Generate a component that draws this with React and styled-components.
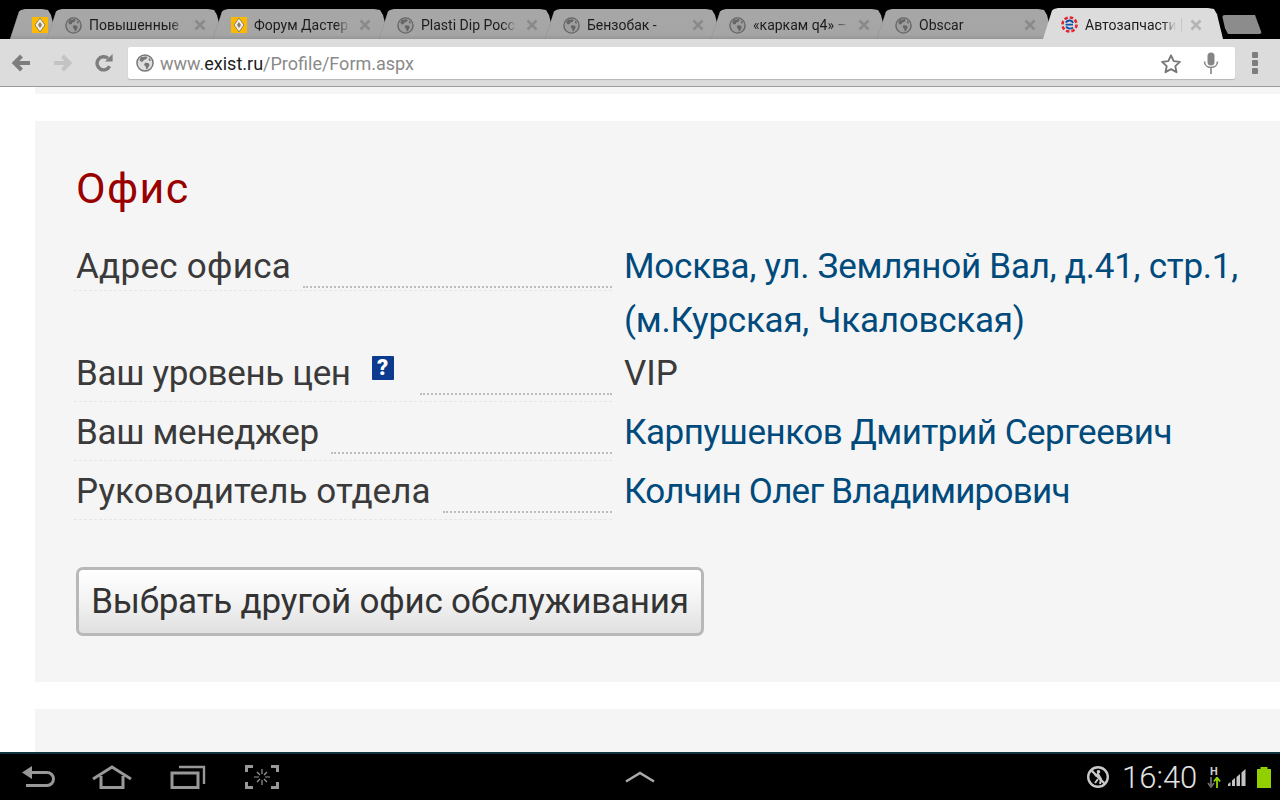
import React from "react";
import styled, { createGlobalStyle } from "styled-components";

const GlobalStyle = createGlobalStyle`
  html, body { margin: 0; padding: 0; background: #fff; }
  body { font-family: Roboto, "Liberation Sans", sans-serif; }
  #root { width: 1280px; height: 800px; overflow: hidden; }
`;

const Screen = styled.div`
  width: 1280px;
  height: 800px;
  display: flex;
  flex-direction: column;
  overflow: hidden;
`;

/* tab strip */
const TabStrip = styled.div`
  height: 39px;
  flex: none;
  background: #000;
  display: flex;
  align-items: flex-end;
  padding-left: 10px;
`;

const TabShape = styled.div`
  position: relative;
  flex: none;
  box-sizing: border-box;
  width: ${({ $w }) => $w || 176}px;
  margin-right: -10px;
  height: ${({ $active }) => ($active ? 31 : 30)}px;
  display: flex;
  align-items: center;
  padding-left: ${({ $stub }) => ($stub ? 22 : 18)}px;
  padding-top: 2px;
  z-index: ${({ $active }) => ($active ? 3 : 1)};
  background: ${({ $active }) =>
    $active ? "#dcdcdc" : "linear-gradient(#a7a7a7, #a5a5a5 85%, #969696)"};
  clip-path: polygon(
    0 100%, 9px 8%, 11px 3%, 15px 0,
    calc(100% - 15px) 0, calc(100% - 9px) 3%, calc(100% - 6px) 20%, 100% 100%
  );
  &::before {
    content: "";
    position: absolute;
    left: 4px;
    top: 0;
    bottom: 0;
    width: 1px;
    background: ${({ $active }) => ($active ? "transparent" : "#7e7e7e")};
    transform: skewX(-18deg);
  }
`;

const TabTitle = styled.span`
  margin-left: 7px;
  width: ${({ $active }) => ($active ? 91 : 96)}px;
  font-size: 14px;
  color: #1c1c1c;
  white-space: nowrap;
  overflow: hidden;
  flex: none;
  -webkit-mask-image: linear-gradient(to right, #000 85%, transparent);
  mask-image: linear-gradient(to right, #000 85%, transparent);
`;

const TabClose = styled.span`
  margin-left: ${({ $active }) => ($active ? 5 : 9)}px;
  padding-left: ${({ $active }) => ($active ? 8 : 0)}px;
  border-left: ${({ $active }) => ($active ? "1px solid #c6c6c6" : "none")};
  display: flex;
  align-items: center;
  height: ${({ $active }) => ($active ? "14px" : "auto")};
`;

const NewTab = styled.div`
  flex: none;
  width: 40px;
  height: 19px;
  margin: 0 0 5px 9px;
  background: #8c8c8c;
  clip-path: polygon(0 0, 33px 0, 100% 100%, 6px 100%, 3px 70%);
  border-radius: 3px;
`;

/* toolbar */
const Toolbar = styled.div`
  height: 48px;
  flex: none;
  box-sizing: border-box;
  background: #dcdcdc;
  border-bottom: 1px solid #9a9a9a;
  display: flex;
  align-items: center;
  padding: 1px 0 0 11px;
`;

const NavIcon = styled.span`
  flex: none;
  display: flex;
  width: ${({ $w }) => $w}px;
  justify-content: flex-start;
`;

const Omnibox = styled.div`
  flex: none;
  box-sizing: border-box;
  width: 1107px;
  height: 32px;
  background: #fff;
  border-radius: 2px;
  box-shadow: 0 1px 1px #b5b5b5;
  display: flex;
  align-items: center;
  padding: 0 16px 0 8px;
`;

const Url = styled.span`
  margin-left: 6px;
  flex: 1;
  font-size: 18px;
  color: #8a8a8a;
`;

const Host = styled.span`
  color: #1c1c1c;
`;

const OmniIcon = styled.span`
  display: flex;
  margin-left: ${({ $gap }) => $gap || 0}px;
`;

const MenuDots = styled.div`
  margin-left: 17px;
  display: grid;
  gap: 2px;
  span {
    display: block;
    width: 6px;
    height: 6px;
    border-radius: 1px;
    background: #7e7e7e;
  }
`;

/* page */
const Page = styled.div`
  flex: 1;
  min-height: 0;
  background: #fff;
  padding-left: 35px;
  display: flex;
  flex-direction: column;
  overflow: hidden;
`;

const Sliver = styled.div`
  flex: none;
  height: ${({ $h }) => $h}px;
  background: #f5f5f5;
  margin: ${({ $m }) => $m || "0"};
`;

const Panel = styled.section`
  flex: none;
  box-sizing: border-box;
  height: 561px;
  margin-top: 27px;
  background: #f5f5f5;
  padding: 43px 0 0 41px;
`;

const Heading = styled.h2`
  margin: 0;
  font-size: 43px;
  line-height: 48px;
  font-weight: 400;
  letter-spacing: 1.4px;
  color: #990000;
`;

const InfoGrid = styled.div`
  margin-top: 28px;
  display: grid;
  grid-template-columns: 536px 1fr;
  column-gap: 12px;
  width: 1204px;
`;

const LabelCell = styled.div`
  display: flex;
  align-items: flex-start;
  box-sizing: border-box;
  height: ${({ $h }) => $h}px;
  margin-left: -2px;
  padding-left: 2px;
  border-bottom: 1px dashed #e6e6e6;
  font-size: 35px;
  line-height: 54px;
  color: #3a3a3a;
  letter-spacing: ${({ $ls }) => $ls}px;
  white-space: nowrap;
`;

const Leader = styled.span`
  flex: 1;
  margin-left: ${({ $gap }) => $gap || 12}px;
  height: 46px;
  border-bottom: 2px dotted #bcbcbc;
`;

const HelpIcon = styled.span`
  flex: none;
  width: 22px;
  height: 24px;
  margin: 9px 0 0 21px;
  background: #0c3a8e;
  border-radius: 1px;
  color: #fff;
  font-size: 22px;
  line-height: 24px;
  font-weight: 900;
  text-align: center;
  letter-spacing: 0;
`;

const ValueCell = styled.div`
  font-size: 35px;
  line-height: 54px;
  letter-spacing: ${({ $ls }) => $ls}px;
  color: ${({ $link }) => ($link ? "#004a7c" : "#3a3a3a")};
  height: ${({ $h }) => $h}px;
`;

const ChangeButton = styled.button`
  display: block;
  box-sizing: border-box;
  width: 628px;
  height: 69px;
  margin-top: 43px;
  padding: 0;
  border: 3px solid #b8b8b8;
  border-radius: 7px;
  background: linear-gradient(#ffffff, #f4f4f4 45%, #e0e0e0);
  font-family: inherit;
  font-size: 35px;
  letter-spacing: -0.2px;
  color: #333;
`;

/* android system bar */
const SystemBar = styled.footer`
  flex: none;
  box-sizing: border-box;
  height: 48px;
  background: #000;
  border-top: 2px solid #0f3440;
  display: flex;
  align-items: center;
  padding: 0 9px 0 22px;
`;

const SysButton = styled.span`
  display: flex;
  margin-left: ${({ $gap }) => $gap || 0}px;
`;

const Status = styled.div`
  margin-left: auto;
  display: flex;
  align-items: center;
`;

const Clock = styled.span`
  margin-left: 12px;
  padding-top: 1px;
  font-size: 31px;
  font-weight: 300;
  color: #e2e2e2;
  width: 75px;
`;

const NetType = styled.div`
  margin-left: 10px;
  width: 14px;
  display: flex;
  flex-direction: column;
  align-items: center;
  font-size: 11px;
  line-height: 11px;
  font-weight: 700;
  color: #cfcfcf;
`;

const StatusIcon = styled.span`
  display: flex;
  margin-left: ${({ $gap }) => $gap}px;
`;

const Globe = ({ size = 17, color = "#666", bg = "#9e9e9e" }) => (
  <svg width={size} height={size} viewBox="0 0 17 17">
    <circle cx="8.5" cy="8.5" r="7.6" fill={bg} stroke={color} strokeWidth="1.4" />
    <path
      d="M5 2.6c1.6.3 3 .2 4.5-.5l1.3 1.5-1.6 1.5-1.8.3-.7 1.6-2 .4-1.5-2zM8.6 8.2l3 .3 1.2 1.6-1.3 3-1.6 1.7-.7-2.7-1.6-2zM12.6 3.6l1.6 2.6-1.6.3-.8-1.6z"
      fill={color}
    />
  </svg>
);

const RenaultIcon = () => (
  <svg width="16" height="16" viewBox="0 0 16 16">
    <rect width="16" height="16" fill="#fdb900" />
    <path d="M8 1 13 8 8 15 3 8z" fill="#f1ece0" stroke="#7d7058" strokeWidth="0.8" />
    <path d="M8 5 10 8 8 11 6 8z" fill="#8b7d63" />
  </svg>
);

const ExistIcon = () => (
  <svg width="17" height="17" viewBox="0 0 17 17">
    <circle cx="8.5" cy="8.5" r="7" fill="none" stroke="#e3262b" strokeWidth="2.6" strokeDasharray="3.5 2" />
    <circle cx="8.5" cy="8.5" r="5.6" fill="#dcdcdc" />
    <path d="M4.5 8.6h7.5" stroke="#1350a8" strokeWidth="1.6" />
    <path d="M5 6.600C6 4 11 3.500 12 7M5.200 10.500C6.500 13 10 13 12 11.500" fill="none" stroke="#1350a8" strokeWidth="1.8" />
  </svg>
);

const CloseX = ({ color = "#8a8a8a" }) => (
  <svg width="12" height="12" viewBox="0 0 12 12">
    <path d="M1.5 1.5l9 9M10.5 1.5l-9 9" stroke={color} strokeWidth="2.6" />
  </svg>
);

const BackIcon = () => (
  <svg width="20" height="18" viewBox="0 0 20 18">
    <path d="M19 9H5M10.5 2 3.5 9l7 7" fill="none" stroke="#7d7d7d" strokeWidth="4" />
  </svg>
);

const ForwardIcon = () => (
  <svg width="20" height="18" viewBox="0 0 20 18">
    <path d="M1 9h14M9.5 2l7 7-7 7" fill="none" stroke="#c3c3c3" strokeWidth="4" />
  </svg>
);

const ReloadIcon = () => (
  <svg width="18" height="18" viewBox="0 0 18 18">
    <path d="M14.6 12.2A6.6 6.6 0 1 1 13 4.3" fill="none" stroke="#7d7d7d" strokeWidth="3.4" />
    <path d="M10 7.6h7.6V0z" fill="#7d7d7d" />
  </svg>
);

const StarIcon = () => (
  <svg width="22" height="21" viewBox="0 0 22 21">
    <path d="M11 2.4l2.7 5.7 6.2.8-4.6 4.2 1.2 6.1L11 16.2l-5.5 3 1.2-6.1L2.1 8.9l6.2-.8z" fill="none" stroke="#777" strokeWidth="1.9" strokeLinejoin="round" />
  </svg>
);

const MicIcon = () => (
  <svg width="16" height="22" viewBox="0 0 16 22">
    <rect x="4.5" y="0.5" width="7" height="13" rx="3.5" fill="#858585" />
    <path d="M1.5 9.5c0 8 13 8 13 0M8 16v6" fill="none" stroke="#858585" strokeWidth="1.6" />
  </svg>
);

const SysBack = () => (
  <svg width="34" height="24" viewBox="0 0 34 24">
    <path d="M9 7.5h16a6.5 6.5 0 0 1 0 13H4" fill="none" stroke="#989898" strokeWidth="3" />
    <path d="M0 7.5 10 1v13z" fill="#989898" />
  </svg>
);

const SysHome = () => (
  <svg width="40" height="24" viewBox="0 0 40 24">
    <path d="M1 14 20 2l19 12M9 11v11.5h22V11" fill="none" stroke="#989898" strokeWidth="3" />
  </svg>
);

const SysRecent = () => (
  <svg width="36" height="24" viewBox="0 0 36 24">
    <path d="M9 2h25v17" fill="none" stroke="#989898" strokeWidth="2.4" />
    <rect x="2" y="8" width="26" height="14.5" fill="none" stroke="#989898" strokeWidth="3" />
  </svg>
);

const SysShot = () => (
  <svg width="34" height="24" viewBox="0 0 34 24">
    <path d="M1.5 7V1.5H8M26 1.5h6.5V7M32.5 17v5.5H26M8 22.500H1.500V17" fill="none" stroke="#989898" strokeWidth="3" />
    <path d="M17 4v5M17 15v5M9 12h5M20 12h5M12 7l3 3M22 7l-3 3M12 17l3-3M22 17l-3-3" stroke="#989898" strokeWidth="1.2" />
  </svg>
);

const SysUp = () => (
  <svg width="30" height="12" viewBox="0 0 30 12">
    <path d="M1 10.5 15 2l14 8.5" fill="none" stroke="#aaa" strokeWidth="2.6" />
  </svg>
);

const NoSync = () => (
  <svg width="24" height="24" viewBox="0 0 24 24">
    <circle cx="12" cy="12" r="9.8" fill="none" stroke="#c8c8c8" strokeWidth="2.4" />
    <path d="M5 5l14 14" stroke="#c8c8c8" strokeWidth="2.4" />
    <circle cx="12.5" cy="6.8" r="1.8" fill="#c8c8c8" />
    <path d="M9 11l3-2 3 5-1 5M12 14l-3 4" fill="none" stroke="#c8c8c8" strokeWidth="2" />
  </svg>
);

const Arrows = () => (
  <svg width="14" height="11" viewBox="0 0 14 11">
    <path d="M4 0v8M1 6l3 4 3-4" fill="none" stroke="#6b6b6b" strokeWidth="1.8" />
    <path d="M10 11V2M7 4.5l3-4 3 4" fill="none" stroke="#8fd400" strokeWidth="1.8" />
  </svg>
);

const Signal = () => (
  <svg width="20" height="18" viewBox="0 0 20 18">
    <path d="M0 18v-2l2.5-2V18zM4 18v-5.500l3-2.500v8zM8.500 18V9l3.500-3v12zM13.500 18V4.500L17.500 1v17z" fill="#c4c4c4" />
  </svg>
);

const Battery = () => (
  <svg width="14" height="21" viewBox="0 0 14 21">
    <path d="M3.5 0h7v2H14v19H0V2h3.500z" fill="#92cf00" />
  </svg>
);

const tabs = [
  { title: "", icon: <RenaultIcon />, w: 47, stub: true },
  { title: "Повышенные", icon: <Globe /> },
  { title: "Форум Дастер", icon: <RenaultIcon /> },
  { title: "Plasti Dip Росс", icon: <Globe /> },
  { title: "Бензобак -", icon: <Globe /> },
  { title: "«каркам q4» –", icon: <Globe /> },
  { title: "Obscar", icon: <Globe /> },
];

export default function App() {
  return (
    <>
      <GlobalStyle />
      <Screen>
        <TabStrip>
          {tabs.map((tab, i) => (
            <TabShape key={i} $w={tab.w} $stub={tab.stub}>
              {tab.icon}
              {!tab.stub && <TabTitle>{tab.title}</TabTitle>}
              {!tab.stub && (
                <TabClose>
                  <CloseX />
                </TabClose>
              )}
            </TabShape>
          ))}
          <TabShape $active $w={180}>
            <ExistIcon />
            <TabTitle $active>Автозапчасти</TabTitle>
            <TabClose $active>
              <CloseX color="#b4b4b4" />
            </TabClose>
          </TabShape>
          <NewTab />
        </TabStrip>

        <Toolbar>
          <NavIcon $w={42}>
            <BackIcon />
          </NavIcon>
          <NavIcon $w={42}>
            <ForwardIcon />
          </NavIcon>
          <NavIcon $w={33}>
            <ReloadIcon />
          </NavIcon>
          <Omnibox>
            <Globe size={18} color="#777" bg="#dedede" />
            <Url>
              www.<Host>exist.ru</Host>/Profile/Form.aspx
            </Url>
            <OmniIcon>
              <StarIcon />
            </OmniIcon>
            <OmniIcon $gap={21}>
              <MicIcon />
            </OmniIcon>
          </Omnibox>
          <MenuDots>
            <span />
            <span />
            <span />
          </MenuDots>
        </Toolbar>

        <Page>
          <Sliver $h={7} />
          <Panel>
            <Heading>Офис</Heading>
            <InfoGrid>
              <LabelCell $h={51} $ls={0.28}>
                Адрес офиса
                <Leader />
              </LabelCell>
              <ValueCell $link $h={107} $ls={-0.23}>
                Москва, ул. Земляной Вал, д.41, стр.1,
                <br />
                (м.Курская, Чкаловская)
              </ValueCell>
              <LabelCell $h={55} $ls={-0.35}>
                Ваш уровень цен
                <HelpIcon>?</HelpIcon>
                <Leader $gap={26} />
              </LabelCell>
              <ValueCell $h={59} $ls={0}>
                VIP
              </ValueCell>
              <LabelCell $h={55} $ls={-0.35}>
                Ваш менеджер
                <Leader />
              </LabelCell>
              <ValueCell $link $h={59} $ls={-0.48}>
                Карпушенков Дмитрий Сергеевич
              </ValueCell>
              <LabelCell $h={55} $ls={0.07}>
                Руководитель отдела
                <Leader />
              </LabelCell>
              <ValueCell $link $h={59} $ls={-0.75}>
                Колчин Олег Владимирович
              </ValueCell>
            </InfoGrid>
            <ChangeButton>Выбрать другой офис обслуживания</ChangeButton>
          </Panel>
          <Sliver $h={43} $m="27px 0 0" />
        </Page>

        <SystemBar>
          <SysButton>
            <SysBack />
          </SysButton>
          <SysButton $gap={36}>
            <SysHome />
          </SysButton>
          <SysButton $gap={38}>
            <SysRecent />
          </SysButton>
          <SysButton $gap={39}>
            <SysShot />
          </SysButton>
          <SysButton $gap={346}>
            <SysUp />
          </SysButton>
          <Status>
            <NoSync />
            <Clock>16:40</Clock>
            <NetType>
              H
              <Arrows />
            </NetType>
            <StatusIcon $gap={7}>
              <Signal />
            </StatusIcon>
            <StatusIcon $gap={9}>
              <Battery />
            </StatusIcon>
          </Status>
        </SystemBar>
      </Screen>
    </>
  );
}
